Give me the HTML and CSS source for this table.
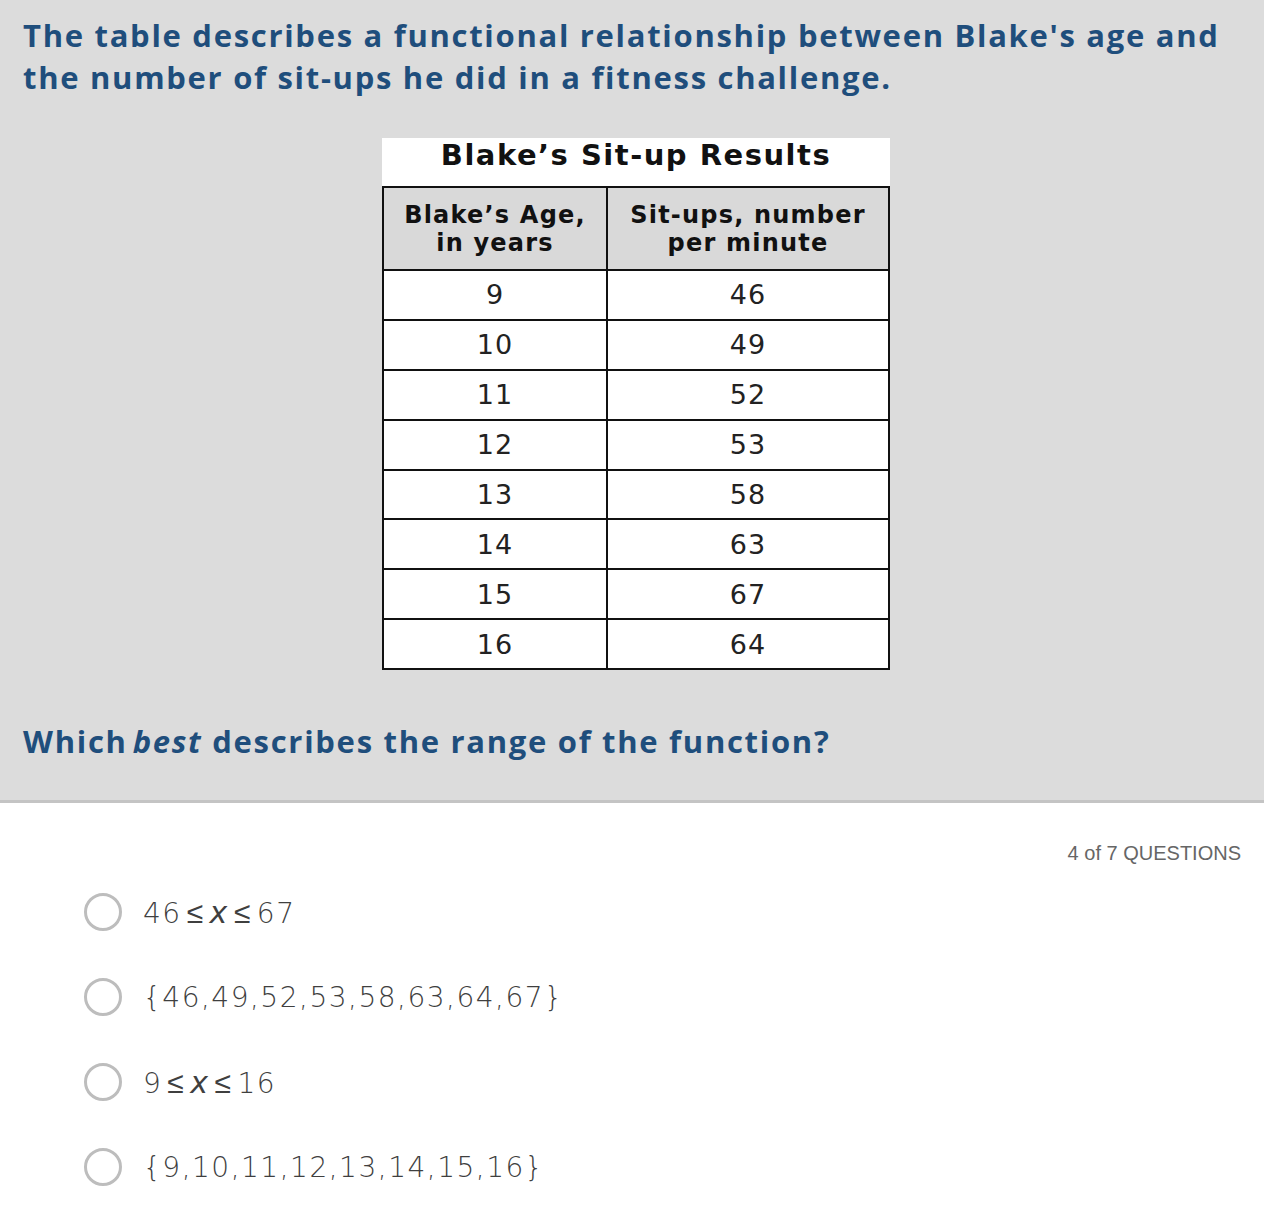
FILE: index.html
```html
<!DOCTYPE html>
<html>
<head>
<meta charset="utf-8">
<link rel="stylesheet" href="styles.css">
</head>
<body>
<section class="stem">
  <p class="prompt">The table describes a functional relationship between Blake's age and the number of sit-ups he did in a fitness challenge.</p>
  <div class="figure">
    <div class="fig-title">Blake’s Sit-up Results</div>
    <table class="data">
      <thead>
        <tr><th>Blake’s Age,<br>in years</th><th>Sit-ups, number<br>per minute</th></tr>
      </thead>
      <tbody>
        <tr><td>9</td><td>46</td></tr>
        <tr><td>10</td><td>49</td></tr>
        <tr><td>11</td><td>52</td></tr>
        <tr><td>12</td><td>53</td></tr>
        <tr><td>13</td><td>58</td></tr>
        <tr><td>14</td><td>63</td></tr>
        <tr><td>15</td><td>67</td></tr>
        <tr><td>16</td><td>64</td></tr>
      </tbody>
    </table>
  </div>
  <p class="question">Which<em>best</em> describes the range of the function?</p>
</section>
<section class="answers">
  <div class="counter">4 of 7 QUESTIONS</div>
  <ul class="choices">
    <li class="choice"><span class="radio"></span><span class="math">46<span class="op">≤</span><i>x</i><span class="op">≤</span>67</span></li>
    <li class="choice"><span class="radio"></span><span class="math set">{46,49,52,53,58,63,64,67}</span></li>
    <li class="choice"><span class="radio"></span><span class="math">9<span class="op">≤</span><i>x</i><span class="op">≤</span>16</span></li>
    <li class="choice"><span class="radio"></span><span class="math set">{9,10,11,12,13,14,15,16}</span></li>
  </ul>
</section>
</body>
</html>
```
FILE: styles.css
```css
html, body {
  margin: 0;
  padding: 0;
  background: #ffffff;
}
body {
  font-family: "Open Sans", Lato, sans-serif;
}
.stem {
  background: #dcdcdc;
  border-bottom: 3px solid #c4c4c4;
  padding: 14px 23px 0 23px;
  height: 786px;
}
.prompt {
  margin: 0;
  color: #1f4e7c;
  font-weight: 700;
  font-size: 31px;
  line-height: 42px;
  letter-spacing: 1.7px;
}
.figure {
  width: 508px;
  margin: 40px auto 0 auto;
  position: relative;
  left: 4px;
  background: #ffffff;
  font-family: "DejaVu Sans", Verdana, sans-serif;
  color: #111;
}
.fig-title {
  height: 48px;
  line-height: 34px;
  text-align: center;
  font-weight: 700;
  font-size: 29px;
  letter-spacing: 1.5px;
}
.data {
  width: 100%;
  border-collapse: collapse;
  border: 2px solid #111;
}
.data th, .data td {
  border: 2px solid #111;
  text-align: center;
  padding: 0;
}
.data th {
  background: #d9d9d9;
  font-size: 24px;
  font-weight: 700;
  line-height: 28px;
  height: 81px;
  letter-spacing: 1.2px;
}
.data th:first-child, .data td:first-child {
  width: 222px;
}
.data td {
  font-size: 27px;
  height: 47.9px;
  letter-spacing: 1px;
  color: #222;
}
.question {
  margin: 50px 0 0 0;
  color: #1f4e7c;
  font-weight: 700;
  font-size: 31px;
  line-height: 42px;
  letter-spacing: 1.7px;
}
.question em {
  font-style: italic;
  margin-left: 5px;
}
.answers {
  padding: 38px 23px 0 84px;
  font-family: "DejaVu Sans", Verdana, sans-serif;
}
.counter {
  text-align: right;
  font-family: "Liberation Sans", Arial, sans-serif;
  color: #666;
  font-size: 20px;
  line-height: 24px;
}
.choices {
  list-style: none;
  margin: 29px 0 0 0;
  padding: 0;
}
.choice {
  display: flex;
  align-items: center;
  height: 36px;
  margin-bottom: 49px;
}
.radio {
  width: 32px;
  height: 32px;
  border: 3px solid #bdbdbd;
  border-radius: 50%;
  flex: none;
  margin-right: 21px;
}
.math {
  font-size: 28px;
  color: #3f3f3f;
  letter-spacing: 1.5px;
  font-weight: 300;
}
.math i {
  font-style: italic;
  font-size: 30px;
}
.op {
  font-size: 30px;
  margin: 0 5px;
}
```
